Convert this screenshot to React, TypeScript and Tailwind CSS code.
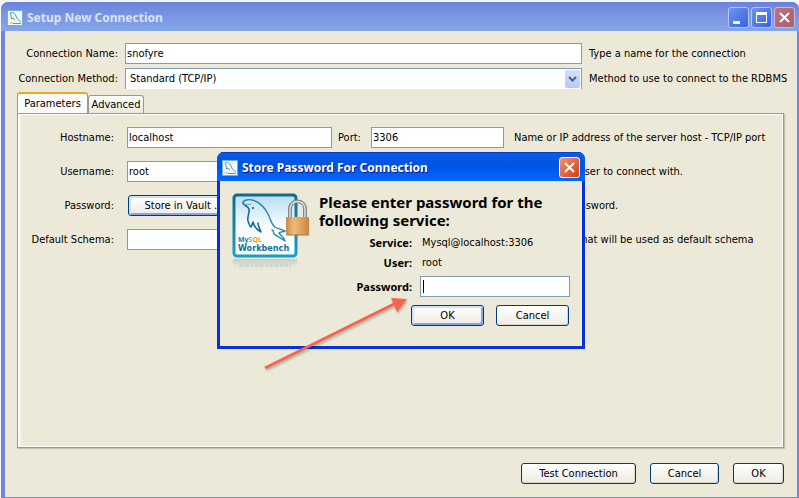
import type { ReactNode } from "react";

const field =
  "h-[21px] border border-[#7f9db9] bg-white px-px text-[11px] leading-4 text-black outline-none";

function XpButton({ children, focused, className }: { children: ReactNode; focused?: boolean; className: string }) {
  const ring = focused
    ? "shadow-[inset_2px_2px_0_#cee0fc,inset_-2px_-2px_0_#8aa4e8]"
    : "shadow-[inset_-1px_-1px_0_#d9d5c8]";
  return (
    <button
      type="button"
      className={`h-[21px] shrink-0 rounded-[3px] border border-[#003c74] bg-linear-to-b from-white via-[#f6f5f0] to-[#ecebe5] text-center leading-4 whitespace-nowrap ${ring} ${className}`}
    >
      {children}
    </button>
  );
}

function Dolphin() {
  return (
    <g fill="none" strokeLinecap="round" strokeLinejoin="round">
      <path
        d="M11 10C11 7 17 6 20 7C27 8 33 15 36 21C39 27 39 31 43 34C46 36 49 36 53 38C51 39 48 39 47 40C49 43 52 44 53 48C50 45 44 43 42 41C41 39 42 37 40 37"
        stroke="#2a86ae"
        strokeWidth="1.4"
      />
      <path
        d="M11 10C12 13 16 13 17 16C18 19 15 23 16 28C17 31 18 34 19 34C20 33 20 31 21 29C22 33 25 37 29 39C28 36 26 33 26 30"
        stroke="#176a94"
        strokeWidth="1.6"
      />
      <path d="M12 11C15 12 17 12 19 11" stroke="#5ba4c4" />
      <circle cx="21" cy="15" r="1" fill="#0c4a70" />
    </g>
  );
}

function AppIcon() {
  return (
    <svg viewBox="0 0 16 16" className="size-4 shrink-0" aria-hidden="true">
      <rect x=".5" y=".5" width="15" height="15" fill="#f3fafd" stroke="#6eaed0" />
      <path d="M3 3C5 1.500 8 3 9 6C10 9 11 10 14 12M3 3C4 4 4 6 4.500 9L6 8L8 10" fill="none" stroke="#5596bd" strokeWidth="1" />
      <path d="M2.500 13H6" stroke="#e8a040" />
      <path d="M6 13.500H14" stroke="#3ba0c8" />
    </svg>
  );
}

function WorkbenchLogo() {
  return (
    <div className="h-20 w-20 shrink-0" role="img" aria-label="MySQL Workbench">
      <svg viewBox="0 0 80 84" className="h-[84px] w-20">
        <defs>
          <linearGradient id="tile" x1="0" y1="0" x2="0" y2="1">
            <stop offset="0" stopColor="#b9def2" />
            <stop offset=".5" stopColor="#f6fbfe" />
            <stop offset="1" stopColor="#fff" />
          </linearGradient>
          <linearGradient id="frame" x1="0" y1="0" x2="0" y2="1">
            <stop offset="0" stopColor="#0f6c90" />
            <stop offset="1" stopColor="#12a0cb" />
          </linearGradient>
          <linearGradient id="brass" x1="0" y1="0" x2="1" y2="0">
            <stop offset="0" stopColor="#c98a45" />
            <stop offset=".35" stopColor="#eebb7c" />
            <stop offset="1" stopColor="#c9863e" />
          </linearGradient>
          <linearGradient id="mirror" x1="0" y1="0" x2="0" y2="1">
            <stop offset="0" stopColor="#a9c0c0" stopOpacity=".65" />
            <stop offset=".4" stopColor="#dfe3da" stopOpacity=".8" />
            <stop offset="1" stopColor="#ece9d8" stopOpacity="0" />
          </linearGradient>
        </defs>
        <path d="M1 66H65V80H1Z" fill="url(#mirror)" />
        <path d="M7 72H59" stroke="#9fb8b8" strokeOpacity=".3" strokeWidth="4" strokeDasharray="4 1 5 1 3 1" />
        <rect x="2" y="2" width="62" height="61" rx="3" fill="url(#tile)" stroke="url(#frame)" strokeWidth="3" />
        <Dolphin />
        <path d="M58 24V16C58 6 73 6 73 16V24" fill="none" stroke="#85898b" strokeWidth="4" />
        <path d="M58 24V16C58 6 73 6 73 16V24" fill="none" stroke="#d9dcdd" strokeWidth="1.5" />
        <rect x="54" y="24" width="23" height="18" rx="1" fill="url(#brass)" />
        <path d="M54 42H77" stroke="#b3763a" />
        <text x="6" y="49" fontSize="7" fontWeight="700" fontFamily="Noto Sans, sans-serif" fill="#1a7ba6">
          My<tspan fill="#eb9a24">SQL</tspan>
        </text>
        <text x="6" y="58" fontSize="9" fontWeight="700" fontFamily="DejaVu Sans Condensed, sans-serif" fill="#10719c">
          Workbench
        </text>
      </svg>
    </div>
  );
}

const captionButton =
  "flex size-[21px] items-center justify-center rounded-[3px] border bg-linear-to-br";

function TitleBar() {
  return (
    <header className="flex h-[29px] shrink-0 items-center gap-1 rounded-t-[7px] bg-linear-to-b from-[#6a82dc] via-[#7b96e3] to-[#84a6ea] pt-[2px] pr-1 pl-[6px]">
      <AppIcon />
      <h1 className="flex-1 font-['Noto_Sans',sans-serif] text-[12px] leading-4 font-bold text-[#d8e4f8]">Setup New Connection</h1>
      <div className="flex gap-[2px]">
        <button type="button" aria-label="Minimize" className={`${captionButton} border-[#b5c7f2] from-[#6e93ee] to-[#3563e2]`}>
          <svg viewBox="0 0 19 19" className="size-[19px]"><path d="M4 13H11V16H4Z" fill="#fff" /></svg>
        </button>
        <button type="button" aria-label="Maximize" className={`${captionButton} border-[#b5c7f2] from-[#6e93ee] to-[#3563e2]`}>
          <svg viewBox="0 0 19 19" className="size-[19px]"><path d="M4 4H15V15H4ZM5 7V14H14V7Z" fill="#fff" fillRule="evenodd" /></svg>
        </button>
        <button type="button" aria-label="Close" className={`${captionButton} border-[#c9b8da] from-[#bd7385] to-[#a9606a]`}>
          <svg viewBox="0 0 19 19" className="size-[19px]"><path d="M5 5L14 14M14 5L5 14" stroke="#fff" strokeWidth="2" /></svg>
        </button>
      </div>
    </header>
  );
}

function ParameterRow({ label, id, hint, children }: { label: string; id: string; hint: string; children: ReactNode }) {
  return (
    <div className="flex h-[21px] items-center">
      <label htmlFor={id} className="w-24 shrink-0 text-right">{label}</label>
      <div className="ml-[13px] flex w-[378px] shrink-0 items-center">{children}</div>
      <span className="ml-[9px] whitespace-nowrap">{hint}</span>
    </div>
  );
}

function PasswordDialog() {
  return (
    <section
      role="dialog"
      aria-labelledby="dialog-title"
      className="absolute top-[152px] left-[217px] w-[368px] overflow-hidden rounded-t-[7px] bg-[#0831d9]"
    >
      <header className="flex h-[29px] items-center gap-1 bg-linear-to-b from-[#0a5be8] via-[#0054e3] to-[#0468fd] pt-[2px] pr-[5px] pl-[5px] shadow-[inset_0_1px_0_#0a3fc0]">
        <AppIcon />
        <h2 id="dialog-title" className="flex-1 font-['Noto_Sans',sans-serif] text-[12px] leading-4 font-bold text-white [text-shadow:1px_1px_0_#0a1883]">
          Store Password For Connection
        </h2>
        <button type="button" aria-label="Close dialog" className={`${captionButton} border-white from-[#f0906c] to-[#d23a10]`}>
          <svg viewBox="0 0 19 19" className="size-[19px]"><path d="M5 5L14 14M14 5L5 14" stroke="#fff" strokeWidth="2" /></svg>
        </button>
      </header>
      <form className="mx-[3px] mb-[3px] flex h-[165px] gap-[7px] bg-[#ece9d8] pt-3 pl-3">
        <WorkbenchLogo />
        <div className="w-[252px]">
          <p className="font-['Noto_Sans',sans-serif] text-[15px] leading-[18px] font-bold">
            Please enter password for the following service:
          </p>
          <dl className="mt-1 grid grid-cols-[93px_1fr] gap-x-[10px] leading-5">
            <dt className="text-right font-['Noto_Sans',sans-serif] font-bold">Service:</dt>
            <dd>Mysql@localhost:3306</dd>
            <dt className="text-right font-['Noto_Sans',sans-serif] font-bold">User:</dt>
            <dd>root</dd>
          </dl>
          <div className="mt-[3px] flex items-center gap-2">
            <label htmlFor="secret" className="w-[93px] text-right font-['Noto_Sans',sans-serif] font-bold">Password:</label>
            <div className="flex h-[21px] w-[150px] items-center border border-[#7f9db9] bg-white pl-[2px]">
              <span className="h-[13px] w-px bg-black" />
              <input id="secret" type="password" className="w-full outline-none" />
            </div>
          </div>
          <div className="mt-2 flex gap-3 pl-[92px]">
            <XpButton focused className="w-[73px]">OK</XpButton>
            <XpButton className="w-[73px]">Cancel</XpButton>
          </div>
        </div>
      </form>
    </section>
  );
}

export default function App() {
  return (
    <div className="relative flex min-h-screen flex-col bg-[#f4f7f6] pt-[2px] pl-px font-['DejaVu_Sans_Condensed','DejaVu_Sans',sans-serif] text-[11px] leading-4 text-black">
      <main className="flex flex-1 flex-col rounded-t-[8px] bg-[#7386dd]">
        <TitleBar />
        <div className="mr-[2px] mb-px ml-1 flex flex-1 flex-col bg-[#ece9d8] pt-3 pr-[13px] pl-3">
          <div className="flex flex-col gap-1">
            <div className="flex items-center gap-[7px]">
              <label htmlFor="conn-name" className="w-[101px] shrink-0 text-right whitespace-nowrap">Connection Name:</label>
              <input id="conn-name" defaultValue="snofyre" className={`${field} min-w-0 flex-1`} />
              <span className="w-[195px] shrink-0 whitespace-nowrap">Type a name for the connection</span>
            </div>
            <div className="flex items-center gap-[7px]">
              <label htmlFor="conn-method" className="w-[101px] shrink-0 text-right whitespace-nowrap">Connection Method:</label>
              <div className="grid h-[21px] min-w-0 flex-1 items-center border border-b-0 border-[#7f9db9] bg-white">
                <select id="conn-method" className="col-start-1 row-start-1 h-5 w-full appearance-none bg-transparent pl-1 outline-none">
                  <option>Standard (TCP/IP)</option>
                </select>
                <span className="pointer-events-none col-start-1 row-start-1 mr-px flex h-[18px] w-[15px] items-center justify-center justify-self-end rounded-[2px] bg-linear-to-b from-[#d3e0fd] to-[#b3c9f9]">
                  <svg viewBox="0 0 9 6" className="h-[6px] w-[9px]"><path d="M1 1L4.500 4.500L8 1" fill="none" stroke="#4d6185" strokeWidth="2" /></svg>
                </span>
              </div>
              <span className="w-[195px] shrink-0 whitespace-nowrap">Method to use to connect to the RDBMS</span>
            </div>
          </div>

          <div role="tablist" className="mt-[3px] flex items-end">
            <button type="button" role="tab" aria-selected="true" className="-mb-px h-[22px] w-[71px] rounded-t-[3px] border border-t-2 border-b-0 border-[#919b9c] border-t-[#f5a623] bg-[#fbfbf9]">
              Parameters
            </button>
            <button type="button" role="tab" aria-selected="false" className="h-[18px] w-14 rounded-t-[3px] border border-b-0 border-[#919b9c] bg-linear-to-b from-white to-[#ece9d8]">
              Advanced
            </button>
          </div>
          <div role="tabpanel" className="flex-1 border border-[#919b9c] shadow-[1px_1px_1px_#c4c1b3,inset_1px_1px_0_white,inset_-1px_-1px_0_white,inset_3px_0_0_#f5f4ee]">
            <div className="flex flex-col gap-[13px] pt-[13px]">
              <ParameterRow label="Hostname:" id="host" hint="Name or IP address of the server host - TCP/IP port">
                <input id="host" defaultValue="localhost" className={`${field} w-[205px]`} />
                <label htmlFor="port" className="ml-[6px] w-[33px]">Port:</label>
                <input id="port" defaultValue="3306" className={`${field} w-[133px]`} />
              </ParameterRow>
              <ParameterRow label="Username:" id="user" hint="Name of the user to connect with.">
                <input id="user" defaultValue="root" className={`${field} w-[205px]`} />
              </ParameterRow>
              <ParameterRow label="Password:" id="vault" hint="The user's password.">
                <XpButton focused className="ml-px w-28">Store in Vault ...</XpButton>
              </ParameterRow>
              <ParameterRow label="Default Schema:" id="schema" hint="The schema that will be used as default schema">
                <input id="schema" className={`${field} w-[205px]`} />
              </ParameterRow>
            </div>
          </div>

          <footer className="flex justify-end gap-[14px] pt-[15px] pb-[13px]">
            <XpButton className="w-[115px]">Test Connection</XpButton>
            <XpButton className="w-[69px]">Cancel</XpButton>
            <XpButton className="w-[51px]">OK</XpButton>
          </footer>
        </div>
      </main>

      <PasswordDialog />

      <svg viewBox="0 0 150 80" className="pointer-events-none absolute top-[295px] left-[260px] h-20 w-[150px] drop-shadow-[1px_2px_1px_#00000040]" aria-hidden="true">
        <path d="M5 73L136 8" stroke="#f4644f" strokeWidth="3" />
        <path d="M131 3L147 4L137 17Z" fill="#f4644f" />
      </svg>
    </div>
  );
}
